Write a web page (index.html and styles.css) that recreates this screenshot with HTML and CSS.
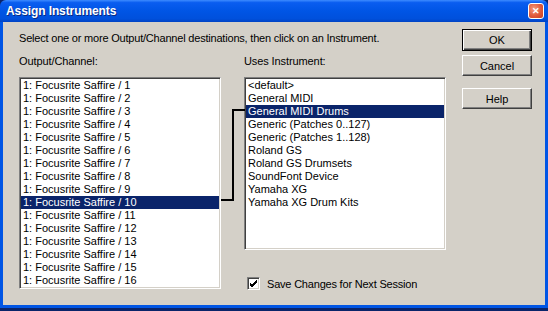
FILE: index.html
```html
<!DOCTYPE html>
<html lang="en">
<head>
  <meta charset="UTF-8" />
  <title>Assign Instruments</title>
  <link rel="stylesheet" href="styles.css">
</head>
<body>

  <div class="window">
    <div class="titlebar">
      <span class="title">Assign Instruments</span>
      <span class="close-btn">&#x2715;</span>
    </div>

    <div class="dialog">
      <div class="main">
        <p class="intro">Select one or more Output/Channel destinations, then click on an Instrument.</p>

        <div class="lists">
          <div class="column">
            <label class="caption">Output/Channel:</label>
            <ul class="listbox channels">
              <li>1: Focusrite Saffire / 1</li>
              <li>1: Focusrite Saffire / 2</li>
              <li>1: Focusrite Saffire / 3</li>
              <li>1: Focusrite Saffire / 4</li>
              <li>1: Focusrite Saffire / 5</li>
              <li>1: Focusrite Saffire / 6</li>
              <li>1: Focusrite Saffire / 7</li>
              <li>1: Focusrite Saffire / 8</li>
              <li>1: Focusrite Saffire / 9</li>
              <li class="selected">1: Focusrite Saffire / 10</li>
              <li>1: Focusrite Saffire / 11</li>
              <li>1: Focusrite Saffire / 12</li>
              <li>1: Focusrite Saffire / 13</li>
              <li>1: Focusrite Saffire / 14</li>
              <li>1: Focusrite Saffire / 15</li>
              <li>1: Focusrite Saffire / 16</li>
            </ul>
          </div>

          <!-- link between selected channel and its instrument -->
          <svg class="connector" width="24" height="94" viewBox="0 0 24 94">
            <polyline points="0,91 12,91 12,1 24,1" fill="none" stroke="#000" stroke-width="2" />
          </svg>

          <div class="column">
            <label class="caption">Uses Instrument:</label>
            <ul class="listbox instruments">
              <li>&lt;default&gt;</li>
              <li>General MIDI</li>
              <li class="selected">General MIDI Drums</li>
              <li>Generic (Patches 0..127)</li>
              <li>Generic (Patches 1..128)</li>
              <li>Roland GS</li>
              <li>Roland GS Drumsets</li>
              <li>SoundFont Device</li>
              <li>Yamaha XG</li>
              <li>Yamaha XG Drum Kits</li>
            </ul>

            <div class="checkbox-row">
              <span class="checkbox">
                <svg width="9" height="9" viewBox="0 0 9 9">
                  <path d="M1 4 L3 6 L8 1 M1 5 L3 7 L8 2 M1 6 L3 8 L8 3" fill="none" stroke="#000" stroke-width="1" />
                </svg>
              </span>
              <span class="check-label">Save Changes for Next Session</span>
            </div>
          </div>
        </div>
      </div>

      <div class="buttons">
        <button class="default">OK</button>
        <button>Cancel</button>
        <button class="help">Help</button>
      </div>
    </div>
  </div>

</body>
</html>
```

FILE: styles.css
```css
body {
  margin: 0;
  padding: 0;
  font-family: 'Liberation Sans', Arial, sans-serif;
  font-size: 11px;
  color: #000;
  background: #0a246a;
}
.window {
  width: 548px;
  height: 311px;
  display: flex;
  flex-direction: column;
  box-sizing: border-box;
  border-bottom: 3px solid #0a246a;
}
.titlebar {
  height: 22px;
  flex: none;
  display: flex;
  align-items: center;
  justify-content: space-between;
  padding: 0 3px 0 6px;
  background: linear-gradient(180deg, #3d8bff 0%, #0a5df0 12%, #0055e5 50%, #0050dc 85%, #0043c4 100%);
  border-radius: 6px 6px 0 0;
}
.title {
  color: #fff;
  font-weight: bold;
  font-size: 12px;
  letter-spacing: -0.1px;
  text-shadow: 1px 1px 0 #0a2a80;
}
.close-btn {
  width: 14px;
  height: 14px;
  margin-right: 1px;
  display: flex;
  align-items: center;
  justify-content: center;
  background: radial-gradient(circle at 35% 35%, #f49a7c 0%, #e0593c 55%, #c8401f 100%);
  border: 1px solid #fff;
  border-radius: 3px;
  color: #fff;
  font-size: 9px;
  font-weight: bold;
}
.dialog {
  flex: 1;
  display: flex;
  background: #d4d0c8;
  border-left: 3px solid #0055e5;
  border-right: 3px solid #0055e5;
  border-bottom: 3px solid #0055e5;
}
.main {
  flex: 1;
  padding: 10px 0 0 16px;
}
.intro {
  margin: 0 0 10px 0;
  line-height: 13px;
  letter-spacing: -0.2px;
}
.lists {
  position: relative;
  display: flex;
  gap: 23px;
}
.column {
  display: flex;
  flex-direction: column;
}
.caption {
  line-height: 13px;
  margin-bottom: 9px;
  letter-spacing: -0.1px;
}
.listbox {
  list-style: none;
  margin: 0;
  padding: 0;
  width: 202px;
  box-sizing: border-box;
  background: #fff;
  border-top: 1px solid #808080;
  border-left: 1px solid #808080;
  border-right: 1px solid #fff;
  border-bottom: 1px solid #fff;
  box-shadow: inset 1px 1px 0 #404040, inset -1px -1px 0 #d4d0c8;
  padding: 1px;
}
.channels {
  height: 212px;
}
.instruments {
  height: 173px;
}
.listbox li {
  height: 13px;
  line-height: 13px;
  padding-left: 2px;
  white-space: nowrap;
}
.listbox li.selected {
  background: #0a246a;
  color: #fff;
}
.connector {
  position: absolute;
  left: 202px;
  top: 54px;
}
.checkbox-row {
  display: flex;
  align-items: center;
  gap: 7px;
  margin: 27px 0 0 3px;
}
.check-label {
  letter-spacing: -0.2px;
}
.checkbox {
  width: 13px;
  height: 13px;
  box-sizing: border-box;
  display: flex;
  align-items: center;
  justify-content: center;
  background: #fff;
  border-top: 1px solid #808080;
  border-left: 1px solid #808080;
  border-right: 1px solid #fff;
  border-bottom: 1px solid #fff;
  box-shadow: inset 1px 1px 0 #404040, inset -1px -1px 0 #d4d0c8;
}
.buttons {
  display: flex;
  flex-direction: column;
  gap: 4px;
  padding: 7px 13px 0 0;
}
button {
  width: 70px;
  height: 21px;
  font-family: 'Liberation Sans', Arial, sans-serif;
  font-size: 11px;
  background: #d4d0c8;
  color: #000;
  padding: 0;
  border-top: 1px solid #fff;
  border-left: 1px solid #fff;
  border-right: 1px solid #404040;
  border-bottom: 1px solid #404040;
  box-shadow: inset -1px -1px 0 #808080;
}
button.default {
  height: 22px;
  border: 1px solid #000;
  box-shadow: inset 1px 1px 0 #fff, inset -1px -1px 0 #404040, inset -2px -2px 0 #808080;
}
button.help {
  margin-top: 8px;
}
```
